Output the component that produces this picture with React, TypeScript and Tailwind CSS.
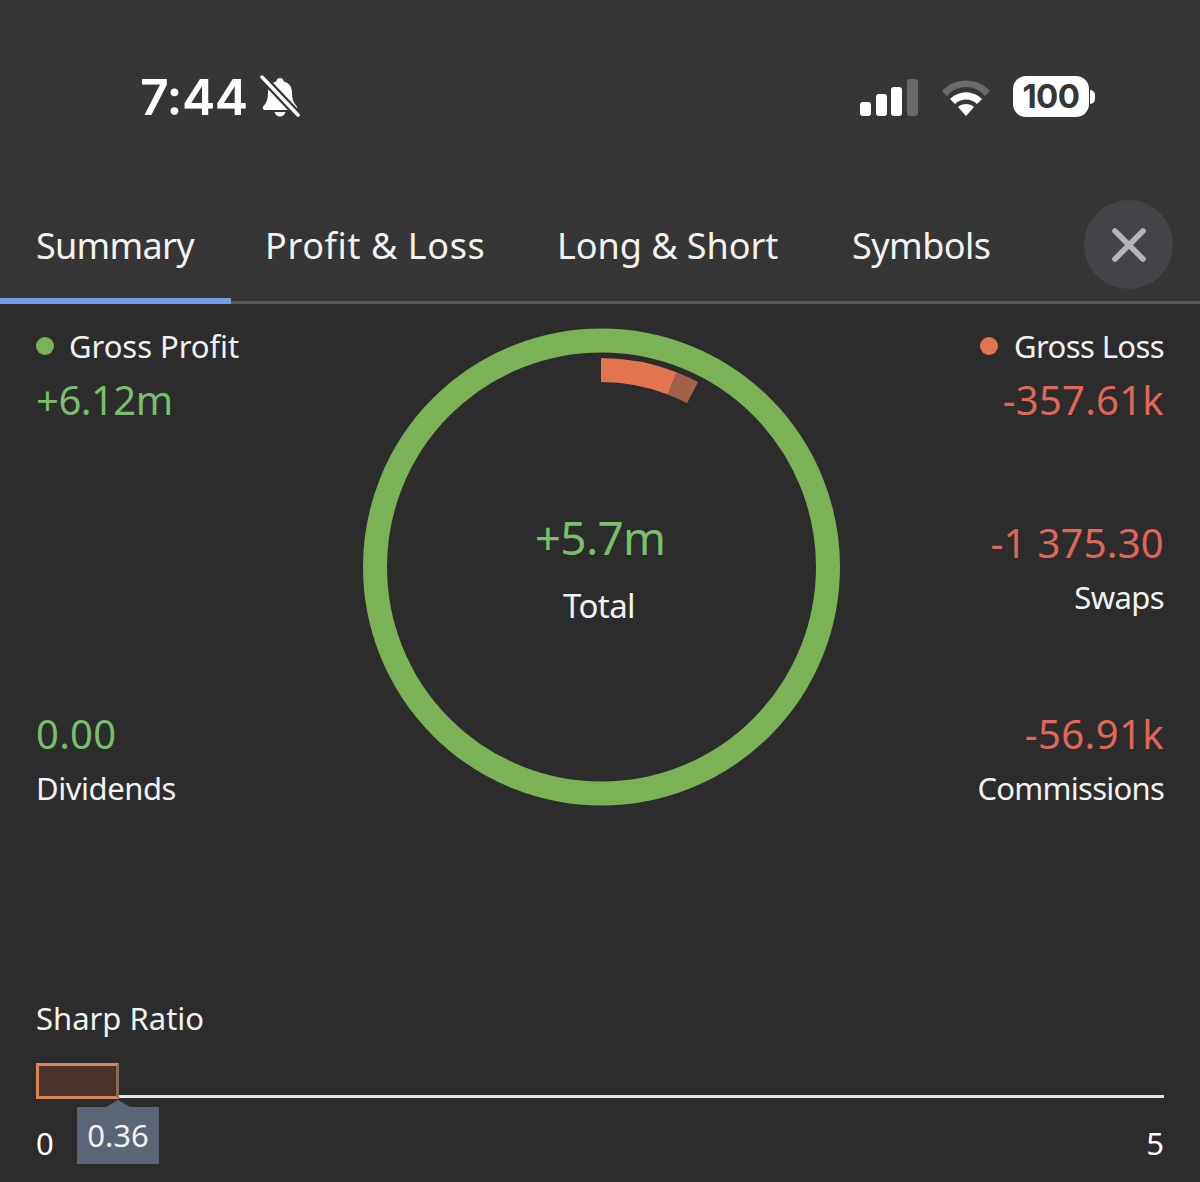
import React from 'react';
import { X } from 'lucide-react';

const font = "font-['Noto_Sans',sans-serif]";

function StatusBar() {
  return (
    <div className="h-[197px] flex items-start justify-between pl-[140px] pr-[105px] pt-[66px]">
      <div className="flex items-center gap-[11px]">
        <span className="font-['Inter',sans-serif] font-semibold text-[50px] leading-[62px] text-white tracking-[-0.5px]">7:44</span>
        <svg width="42" height="44" viewBox="0 0 42 44" fill="none">
          <path d="M21 3c-2 0-3.500 1.500-3.800 3.500C11.500 8 9 12 9 18c0 6-1.500 10-4.500 13-1.500 1.500-.5 4 1.500 4h30c2 0 3-2.500 1.500-4C34.500 28 33 24 33 18c0-6-2.500-10-8.200-11.500C24.500 4.500 23 3 21 3z" fill="white" />
          <path d="M15.500 37c.8 3 3 4.500 5.500 4.500s4.700-1.500 5.500-4.500z" fill="white" />
          <path d="M4 3l35 37" stroke="#363636" strokeWidth="8" />
          <path d="M3 2l36 38" stroke="white" strokeWidth="3.500" strokeLinecap="round" />
        </svg>
      </div>
      <div className="flex items-center gap-[22px] pt-[10px]">
        <svg width="60" height="38" viewBox="0 0 60 38">
          <rect x="1" y="24" width="11" height="14" rx="3" fill="white" />
          <rect x="17" y="16" width="11" height="22" rx="3" fill="white" />
          <rect x="32" y="9" width="11" height="29" rx="3" fill="white" />
          <rect x="48" y="1" width="11" height="37" rx="3" fill="#6a6a6a" />
        </svg>
        <svg width="50" height="38" viewBox="0 0 50 38">
          <path d="M1 13C13-1 37-1 49 13l-5 5C34 6 16 6 6 18z" fill="#6a6a6a" />
          <path d="M9 21c9-9 23-9 32 0l-5 5c-6-6-16-6-22 0z" fill="white" />
          <path d="M17 29c4-4 12-4 16 0l-8 9z" fill="white" />
        </svg>
        <div className="flex items-center gap-[1px]">
          <div className="w-[76px] h-[41px] rounded-[13px] bg-white flex items-center justify-center font-['Inter',sans-serif] font-bold text-[33px] leading-none text-[#363636] tracking-[-0.5px]">100</div>
          <div className="w-[5px] h-[14px] rounded-r-full bg-white" />
        </div>
      </div>
    </div>
  );
}

function Tabs() {
  return (
    <div className="relative h-[107px] flex items-start text-[36px] leading-[50px] text-[#f2f2f2] border-b-[3px] border-[#5a5a5a]">
      <div className="w-[231px] pl-[36px] pt-[24px] tracking-[-0.7px]">Summary</div>
      <div className="w-[292px] pl-[34px] pt-[24px] tracking-[0.6px]">Profit &amp; Loss</div>
      <div className="w-[293px] pl-[34px] pt-[24px] tracking-[-0.05px]">Long &amp; Short</div>
      <div className="pl-[36px] pt-[24px] tracking-[-0.55px]">Symbols</div>
      <div className="absolute left-0 bottom-[-3px] w-[231px] h-[6px] bg-[#6f9fe8]" />
      <button className="absolute right-[27px] top-[3px] w-[89px] h-[89px] rounded-full bg-[#454549] flex items-center justify-center text-[#b4b4b9]">
        <X size={56} strokeWidth={2.400} />
      </button>
    </div>
  );
}

function Ring() {
  return (
    <svg width="480" height="480" viewBox="0 0 480 480">
      <circle cx="240.500" cy="240" r="226.500" fill="none" stroke="#7cb256" strokeWidth="24" />
      <path d="M240 31 A209 209 0 0 1 315.600 45.200 L306.900 67.500 A185 185 0 0 0 240 55 Z" fill="#e2754f" />
      <path d="M315.600 45.200 A209 209 0 0 1 337.100 55 L326 76.200 A185 185 0 0 0 306.900 67.500 Z" fill="#a4614a" />
    </svg>
  );
}

function Ratio() {
  return (
    <div className="px-[36px]">
      <div className="text-[31px] leading-[42px] text-[#f2f2f2]">Sharp Ratio</div>
      <div className="relative h-[54px] mt-[24px]">
        <div className="absolute left-0 right-0 top-[32px] h-[3px] bg-[#e4e4f0]" />
        <div className="absolute left-0 top-0 w-[83px] h-[36px] bg-[#4a322b] border-[3px] border-[#d98556] border-r-[#8a6a5a]" />
      </div>
      <div className="relative flex justify-between text-[31px] leading-[42px] text-white -mt-[5px]">
        <span className="pt-[10px]">0</span>
        <span className="pt-[10px]">5</span>
        <div className="absolute left-[41px] top-[-5px] w-[82px] h-[57px] bg-[#5a6675] text-center leading-[56px] text-[#f2f2f2]">
          0.36
          <div className="absolute left-[29px] top-[-7px] w-0 h-0 border-l-[12px] border-r-[12px] border-b-[7px] border-l-transparent border-r-transparent border-b-[#5a6675]" />
        </div>
      </div>
    </div>
  );
}

export default function App() {
  return (
    <div className={`w-[1200px] h-[1182px] overflow-hidden bg-[#2c2c2c] ${font}`}>
      <div className="bg-[#363636]">
        <StatusBar />
        <Tabs />
      </div>
      <div className="relative h-[693px] flex justify-between px-[36px] pt-[21px]">
        <div className="flex flex-col">
          <div className="flex items-center gap-[15px] text-[31px] leading-[42px] text-[#f2f2f2] tracking-[-0.05px]">
            <span className="w-[18px] h-[18px] rounded-full bg-[#7cb256]" />Gross Profit
          </div>
          <div className="text-[40px] leading-[54px] text-[#79bd6d] mt-[6px] tracking-[-0.5px]">+6.12m</div>
          <div className="text-[40px] leading-[54px] text-[#79bd6d] mt-[280px] tracking-[0.25px]">0.00</div>
          <div className="text-[31px] leading-[42px] text-[#f2f2f2] mt-[6px] tracking-[-0.45px]">Dividends</div>
        </div>
        <div className="absolute left-[361px] top-[23px] w-[480px] h-[480px]">
          <Ring />
          <div className="absolute inset-0 flex flex-col items-center pt-[180px]">
            <div className="text-[46px] leading-[60px] text-[#79bd6d] tracking-[-0.8px] mr-[2px]">+5.7m</div>
            <div className="text-[33px] leading-[46px] text-[#f2f2f2] mt-[16px] tracking-[-0.6px] mr-[4px]">Total</div>
          </div>
        </div>
        <div className="flex flex-col items-end">
          <div className="flex items-center gap-[16px] text-[31px] leading-[42px] text-[#f2f2f2] tracking-[-0.6px]">
            <span className="w-[18px] h-[18px] rounded-full bg-[#e2754f]" />Gross Loss
          </div>
          <div className="text-[40px] leading-[54px] text-[#e0655a] mt-[6px] tracking-[0.25px]">-357.61k</div>
          <div className="text-[40px] leading-[54px] text-[#e0655a] mt-[89px] tracking-[0.25px]">-1 375.30</div>
          <div className="text-[31px] leading-[42px] text-[#f2f2f2] mt-[6px] tracking-[-0.6px]">Swaps</div>
          <div className="text-[40px] leading-[54px] text-[#e0655a] mt-[89px] tracking-[0.4px]">-56.91k</div>
          <div className="text-[31px] leading-[42px] text-[#f2f2f2] mt-[6px] tracking-[-0.75px]">Commissions</div>
        </div>
      </div>
      <Ratio />
    </div>
  );
}
